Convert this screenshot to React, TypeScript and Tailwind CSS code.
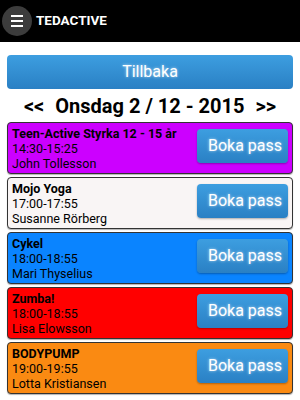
import React from 'react'

const PASS = [
    { titel: 'Teen-Active Styrka 12 - 15 år', tid: '14:30-15:25', ledare: 'John Tollesson', bg: 'bg-[#cc00ff]' },
    { titel: 'Mojo Yoga', tid: '17:00-17:55', ledare: 'Susanne Rörberg', bg: 'bg-[#f9f5f5]' },
    { titel: 'Cykel', tid: '18:00-18:55', ledare: 'Mari Thyselius', bg: 'bg-[#0a84ff]' },
    { titel: 'Zumba!', tid: '18:00-18:55', ledare: 'Lisa Elowsson', bg: 'bg-[#ff0000]' },
    { titel: 'BODYPUMP', tid: '19:00-19:55', ledare: 'Lotta Kristiansen', bg: 'bg-[#fa8a12]' },
]

const glow = '[text-shadow:0_0_3px_rgba(255,255,255,0.7)]'

export default function App() {
    return (
        <div className="w-[300px] h-[400px] overflow-hidden bg-white font-['Roboto','Liberation_Sans',sans-serif]">
            <div className="h-[42px] bg-black flex items-center">
                <div className="ml-[2px] w-[30px] h-[30px] rounded-full bg-[#3c3c3c] flex items-center justify-center">
                    <div className="flex flex-col gap-[3px]">
                        <span className="block w-[12px] h-[2px] bg-white"></span>
                        <span className="block w-[12px] h-[2px] bg-white"></span>
                        <span className="block w-[12px] h-[2px] bg-white"></span>
                    </div>
                </div>
                <span className="ml-[4px] text-white font-bold text-[13.5px] leading-none">TEDACTIVE</span>
            </div>

            <div className="px-[7px]">
                <button className={`mt-[13px] w-full h-[34px] rounded-[4px] bg-gradient-to-b from-[#3d9ee0] to-[#2a80c4] text-white text-[16px] ${glow}`}>
                    Tillbaka
                </button>

                <div className="h-[33px] flex items-center justify-center gap-[11px] font-bold text-[20px] text-black leading-none">
                    <span>&lt;&lt;</span>
                    <span>Onsdag 2 / 12 - 2015</span>
                    <span>&gt;&gt;</span>
                </div>

                <div className="flex flex-col gap-[3px]">
                    {PASS.map((p) => (
                        <div
                            key={p.titel}
                            className={`h-[52px] rounded-[4px] border border-[#333] ${p.bg} flex items-center justify-between pl-[4px] pr-[4px] shadow-[0_1px_1px_rgba(0,0,0,0.3)]`}
                        >
                            <div className="text-[12.5px] leading-[15px] text-black">
                                <div className="font-bold">{p.titel}</div>
                                <div>{p.tid}</div>
                                <div>{p.ledare}</div>
                            </div>
                            <button className={`self-start mt-[6px] w-[91px] h-[34px] rounded-[4px] bg-gradient-to-b from-[#3d9ee0] to-[#2a80c4] text-white text-[16px] flex items-center justify-end pr-[6px] shadow-[0_1px_2px_rgba(0,0,0,0.3)] ${glow}`}>
                                Boka pass
                            </button>
                        </div>
                    ))}
                </div>
            </div>
        </div>
    )
}
